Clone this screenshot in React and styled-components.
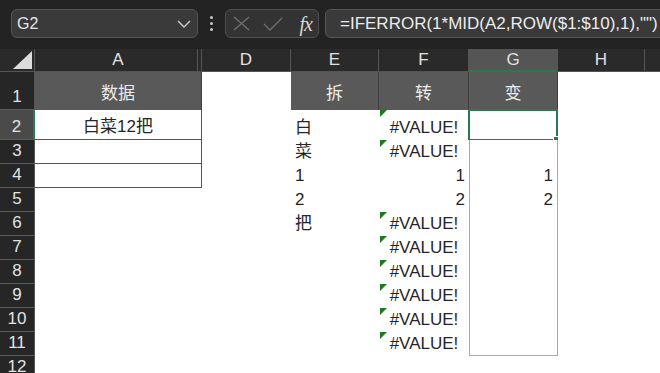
import React from 'react'
import styled, { createGlobalStyle, css } from 'styled-components'

const Global = createGlobalStyle`
  html, body { margin: 0; padding: 0; background: #fff; overflow: hidden; }
  body { font-family: "Liberation Sans", "Noto Sans CJK SC", sans-serif; }
`

const GREEN = '#2a7a4f'

// 工具栏
const Toolbar = styled.div`
  height: 49px;
  background: #232323;
  display: flex;
  align-items: flex-start;
  padding: 9px 0 0 11px;
  box-sizing: border-box;
  overflow: hidden;
  color: #e6e6e6;
  & > * { flex: none; }
`

const NameBox = styled.div`
  width: 187px;
  height: 29px;
  box-sizing: border-box;
  background: #3a3a3a;
  border: 1px solid #555;
  border-radius: 6px;
  display: flex;
  align-items: center;
  justify-content: space-between;
  padding: 0 6px 0 5px;
  font-size: 16px;
`

const Grip = styled.div`
  width: 27px;
  height: 29px;
  display: flex;
  flex-direction: column;
  align-items: center;
  justify-content: center;
  gap: 3px;
  i {
    width: 3px;
    height: 3px;
    border-radius: 50%;
    background: #c8c8c8;
  }
`

const FxButtons = styled.div`
  width: 94px;
  height: 29px;
  box-sizing: border-box;
  background: #333;
  border: 1px solid #4f4f4f;
  border-radius: 6px;
  display: flex;
  align-items: center;
  padding: 0 6px 0 7px;
  gap: 13px;
`

const Fx = styled.span`
  font-family: "Liberation Serif", serif;
  font-style: italic;
  font-size: 20px;
  color: #d6d6d6;
  margin-left: auto;
  letter-spacing: -1px;
  line-height: 1;
`

const FormulaBar = styled.div`
  margin-left: 6px;
  width: 360px;
  height: 29px;
  box-sizing: border-box;
  background: #3a3a3a;
  border: 1px solid #555;
  border-radius: 6px;
  display: flex;
  align-items: center;
  padding-left: 14px;
  font-size: 17px;
  white-space: nowrap;
  color: #ececec;
`

// 表格
const Viewport = styled.div`
  width: 660px;
  height: 324px;
  overflow: hidden;
`

const Sheet = styled.div`
  display: grid;
  grid-template-columns: 35px 167px 89px 88px 90px 89px 87px 90px;
  grid-template-rows: 23px 38px 30px repeat(10, 24px);
  font-size: 17px;
  color: #262626;
`

const Corner = styled.div`
  background: #2a2a2a;
  border-right: 1px solid #555;
  border-bottom: 1px solid #555;
  display: flex;
  align-items: flex-end;
  justify-content: flex-end;
  padding: 0 2px 2px 0;
`

const ColHead = styled.div`
  background: ${(p) => (p.$active ? '#555' : '#2a2a2a')};
  color: #e2e2e2;
  border-right: 1px solid #555;
  border-bottom: ${(p) => (p.$active ? `2px solid ${GREEN}` : '1px solid #555')};
  display: flex;
  align-items: center;
  justify-content: center;
  font-size: 17px;
  ${(p) => p.$hidden && css`box-shadow: inset -3px 0 0 #2a2a2a, inset -4px 0 0 #555;`}
`

const RowHead = styled.div`
  background: ${(p) => (p.$active ? '#4a4a4a' : '#262626')};
  color: #e2e2e2;
  border-bottom: 1px solid #5a5a5a;
  border-right: ${(p) => (p.$active ? `2px solid ${GREEN}` : '1px solid #555')};
  display: flex;
  align-items: flex-end;
  justify-content: center;
  padding-bottom: 2px;
  box-sizing: border-box;
  font-size: 17px;
`

const Cell = styled.div`
  position: relative;
  box-sizing: border-box;
  display: flex;
  align-items: flex-end;
  padding: 0 4px 2px;
  justify-content: ${(p) => p.$align || 'flex-start'};
  white-space: nowrap;
  background: #fff;

  ${(p) => p.$kind === 'head' && css`
    background: #595959;
    color: #ededed;
    align-items: center;
    justify-content: center;
    padding: 0;
    border-right: 1px solid #3f3f3f;
  `}

  ${(p) => p.$kind === 'box' && css`
    border-right: 1px solid #555;
    border-bottom: 1px solid #555;
  `}

  ${(p) => p.$spill && css`
    border-left: 1px solid #94acd6;
    border-right: 1px solid #94acd6;
  `}
  ${(p) => p.$spill === 'end' && css`border-bottom: 1px solid #94acd6;`}

  ${(p) => p.$selected && css`
    border: 2px solid ${GREEN};
    margin: -1px 0 -1px -1px;
    &::after {
      content: '';
      position: absolute;
      right: -4px;
      bottom: -4px;
      width: 5px;
      height: 5px;
      background: ${GREEN};
      border: 1px solid #fff;
    }
  `}
`

const ErrorMark = styled.span`
  position: absolute;
  left: 1px;
  top: 0;
  width: 0;
  height: 0;
  border-top: 7px solid #1b7a1b;
  border-right: 7px solid transparent;
`

// 最后一列只露出一点，不显示列标
const cols = ['A', 'D', 'E', 'F', 'G', 'H', 'I']
const labels = { I: '' }

const ERR = '#VALUE!'
const data = {
  1: { A: '数据', E: '拆', F: '转', G: '变' },
  2: { A: '白菜12把', E: '白', F: ERR },
  3: { E: '菜', F: ERR },
  4: { E: '1', F: 1, G: 1 },
  5: { E: '2', F: 2, G: 2 },
  6: { E: '把', F: ERR },
  7: { F: ERR },
  8: { F: ERR },
  9: { F: ERR },
  10: { F: ERR },
  11: { F: ERR },
  12: {},
}

function Chevron() {
  return (
    <svg width="14" height="8" viewBox="0 0 14 8">
      <path d="M1 1 L7 7 L13 1" fill="none" stroke="#cfcfcf" strokeWidth="1.4" />
    </svg>
  )
}

function CellFor({ row, col }) {
  const v = data[row][col]
  if (row === 1) {
    return <Cell $kind={v ? 'head' : undefined}>{v}</Cell>
  }
  const props = {}
  if (col === 'A' && row >= 2 && row <= 4) {
    props.$kind = 'box'
    props.$align = 'center'
  }
  if (col === 'G' && row === 2) props.$selected = true
  if (col === 'G' && row > 2 && row <= 11) props.$spill = row === 11 ? 'end' : 'mid'
  // 数字靠右，错误值居中，文本靠左
  if (typeof v === 'number') props.$align = 'flex-end'
  if (v === ERR) props.$align = 'center'
  return (
    <Cell {...props}>
      {v === ERR && <ErrorMark />}
      {v}
    </Cell>
  )
}

export default function App() {
  const rows = Object.keys(data).map(Number)
  return (
    <>
      <Global />
      <Toolbar>
        <NameBox>
          <span>G2</span>
          <Chevron />
        </NameBox>
        <Grip><i /><i /><i /></Grip>
        <FxButtons>
          <svg width="17" height="15" viewBox="0 0 17 15">
            <path d="M1 1 L16 14 M16 1 L1 14" stroke="#707070" strokeWidth="1.3" />
          </svg>
          <svg width="20" height="14" viewBox="0 0 20 14">
            <path d="M1 7 L7 13 L19 1" fill="none" stroke="#707070" strokeWidth="1.3" />
          </svg>
          <Fx>fx</Fx>
        </FxButtons>
        <FormulaBar>=IFERROR(1*MID(A2,ROW($1:$10),1),"")</FormulaBar>
      </Toolbar>
      <Viewport>
        <Sheet>
          <Corner>
            <svg width="19" height="18" viewBox="0 0 19 18">
              <polygon points="19,0 19,18 0,18" fill="#dcdcdc" />
            </svg>
          </Corner>
          {cols.map((c) => (
            <ColHead key={c} $active={c === 'G'} $hidden={c === 'A'}>
              {labels[c] ?? c}
            </ColHead>
          ))}
          {rows.map((r) => (
            <React.Fragment key={r}>
              <RowHead $active={r === 2}>{r}</RowHead>
              {cols.map((c) => (
                <CellFor key={c} row={r} col={c} />
              ))}
            </React.Fragment>
          ))}
        </Sheet>
      </Viewport>
    </>
  )
}
